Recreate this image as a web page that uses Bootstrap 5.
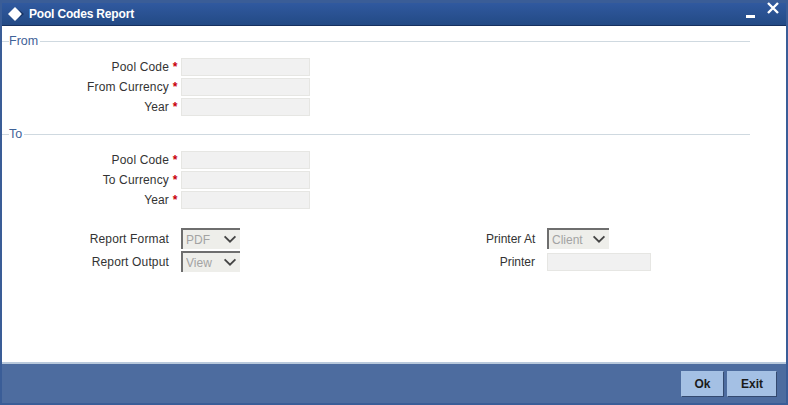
<!DOCTYPE html>
<html lang="en">
<head>
  <meta charset="UTF-8" />
  <meta name="viewport" content="width=device-width, initial-scale=1" />
  <title>Pool Codes Report</title>
  <link href="https://cdn.jsdelivr.net/npm/bootstrap@5.3.7/dist/css/bootstrap.min.css" rel="stylesheet" />
  <style>
    html, body {
      height: 100%;
      margin: 0;
    }

    body {
      background-color: #3a5d97;
      font-family: "Liberation Sans", Arial, sans-serif;
      font-size: 12px;
      color: #333;
    }

    .report-window {
      height: 405px;
      padding: 3px 2px 2px 2px;
    }

    .title-strip {
      height: 23px;
      padding: 0 6px 0 6px;
      color: #fff;
      font-weight: 700;
      background: linear-gradient(#30599f, #234a85);
      border-bottom: 1px solid #16305f;
    }

    .title-text {
      margin-left: 5px;
      letter-spacing: -0.18px;
    }

    .title-actions {
      margin-right: 1px;
    }

    .min-glyph {
      width: 9px;
      height: 3px;
      margin-top: 5px;
      margin-right: 4px;
      background-color: #fff;
    }

    .close-glyph {
      margin-top: -8px;
    }

    .form-area {
      height: 336px;
      padding-top: 7px;
      background-color: #fff;
    }

    .group-legend {
      height: 16px;
      padding-right: 36px;
      color: #3f6298;
      font-size: 12.5px;
    }

    .group-legend::before {
      content: "";
      width: 7px;
      height: 1px;
      background-color: #cfd9e0;
    }

    .group-legend::after {
      content: "";
      flex: 1;
      height: 1px;
      margin-left: 2px;
      background-color: #cfd9e0;
    }

    .field-stack {
      padding-top: 9px;
      row-gap: 2px;
    }

    .field-line {
      height: 18px;
    }

    .field-label {
      width: 167px;
      text-align: right;
      letter-spacing: 0.15px;
    }

    .req-mark {
      width: 12px;
      text-align: center;
      color: #c8000a;
      font-weight: 700;
    }

    .plain-input {
      width: 129px;
      height: 18px;
      padding: 0;
      border: 1px solid #e6e6e3;
      border-radius: 0;
      background-color: #f1f1f1;
    }

    .to-group {
      margin-top: 10px;
    }

    .output-block {
      margin-top: 19px;
    }

    .output-col-left {
      width: 484px;
    }

    .output-line {
      height: 21px;
      margin-bottom: 2px;
    }

    .left-label {
      width: 167px;
      margin-right: 12px;
      text-align: right;
      letter-spacing: 0.15px;
    }

    .right-label {
      width: 49px;
      margin-right: 12px;
      text-align: right;
      white-space: nowrap;
    }

    .form-select.combo-box {
      height: 21px;
      min-height: 0;
      padding: 0 0 0 3px;
      border-width: 2px 0 0 2px;
      border-style: solid;
      border-color: #6e6e6e;
      border-radius: 0;
      font-size: 12px;
      color: #a3a3a3;
      opacity: 1;
      background-color: #eeeeea;
      background-position: right 3px center;
      background-size: 14px 9px;
      background-image: url("data:image/svg+xml,%3csvg xmlns='http://www.w3.org/2000/svg' viewBox='0 0 15 10'%3e%3cpath fill='none' stroke='%23444' stroke-width='2' d='M1.5 1.5l6 6 6-6'/%3e%3c/svg%3e");
    }

    .combo-short {
      width: 59px;
    }

    .combo-wide {
      width: 62px;
    }

    .printer-input {
      width: 104px;
    }

    .footer-strip {
      height: 41px;
      padding-right: 9px;
      background-color: #4d6c9f;
      border-top: 2px solid #b9c9dc;
      gap: 3px;
    }

    .btn.action-btn {
      width: 43px;
      height: 26px;
      padding: 0;
      border: 1px solid #a5c1e4;
      border-right-color: #33496f;
      border-bottom-color: #33496f;
      border-radius: 0;
      background-color: #a4c0e4;
      color: #1b1b1b;
      font-size: 12px;
      font-weight: 700;
    }

    .btn.exit-btn {
      width: 50px;
    }
  </style>
</head>
<body>
<div class="report-window d-flex flex-column">
  <!-- TITLE BAR -->
  <div class="title-strip d-flex align-items-center">
    <svg width="16" height="14" viewBox="0 0 16 14"><path fill="#fff" d="M7 0l7 7-7 7-7-7z"/><path fill="#16305f" d="M10 2l6 5-6 5 4-5z"/></svg>
    <span class="title-text">Pool Codes Report</span>
    <div class="title-actions ms-auto d-flex gap-2">
      <div class="min-glyph"></div>
      <svg class="close-glyph" width="12" height="12" viewBox="0 0 12 12"><path stroke="#fff" stroke-width="2.4" d="M1 1l10 10M11 1L1 11"/></svg>
    </div>
  </div>

  <!-- FORM -->
  <div class="form-area">
    <div class="group-legend d-flex align-items-center">From</div>
    <div class="field-stack d-flex flex-column">
      <div class="field-line d-flex align-items-center"><span class="field-label">Pool Code</span><span class="req-mark">*</span><input class="plain-input" type="text" disabled /></div>
      <div class="field-line d-flex align-items-center"><span class="field-label">From Currency</span><span class="req-mark">*</span><input class="plain-input" type="text" disabled /></div>
      <div class="field-line d-flex align-items-center"><span class="field-label">Year</span><span class="req-mark">*</span><input class="plain-input" type="text" disabled /></div>
    </div>

    <div class="group-legend to-group d-flex align-items-center">To</div>
    <div class="field-stack d-flex flex-column">
      <div class="field-line d-flex align-items-center"><span class="field-label">Pool Code</span><span class="req-mark">*</span><input class="plain-input" type="text" disabled /></div>
      <div class="field-line d-flex align-items-center"><span class="field-label">To Currency</span><span class="req-mark">*</span><input class="plain-input" type="text" disabled /></div>
      <div class="field-line d-flex align-items-center"><span class="field-label">Year</span><span class="req-mark">*</span><input class="plain-input" type="text" disabled /></div>
    </div>

    <div class="output-block d-flex">
      <div class="output-col-left">
        <div class="output-line d-flex align-items-center">
          <span class="left-label">Report Format</span>
          <select class="form-select combo-box combo-short" disabled><option>PDF</option></select>
        </div>
        <div class="output-line d-flex align-items-center">
          <span class="left-label">Report Output</span>
          <select class="form-select combo-box combo-short" disabled><option>View</option></select>
        </div>
      </div>
      <div>
        <div class="output-line d-flex align-items-center">
          <span class="right-label">Printer At</span>
          <select class="form-select combo-box combo-wide" disabled><option>Client</option></select>
        </div>
        <div class="output-line d-flex align-items-center">
          <span class="right-label">Printer</span>
          <input class="plain-input printer-input" type="text" disabled />
        </div>
      </div>
    </div>
  </div>

  <!-- BUTTONS -->
  <div class="footer-strip d-flex align-items-center justify-content-end">
    <button type="button" class="btn action-btn">Ok</button>
    <button type="button" class="btn action-btn exit-btn">Exit</button>
  </div>
</div>
<script src="https://cdn.jsdelivr.net/npm/bootstrap@5.3.7/dist/js/bootstrap.bundle.min.js"></script>
</body>
</html>
